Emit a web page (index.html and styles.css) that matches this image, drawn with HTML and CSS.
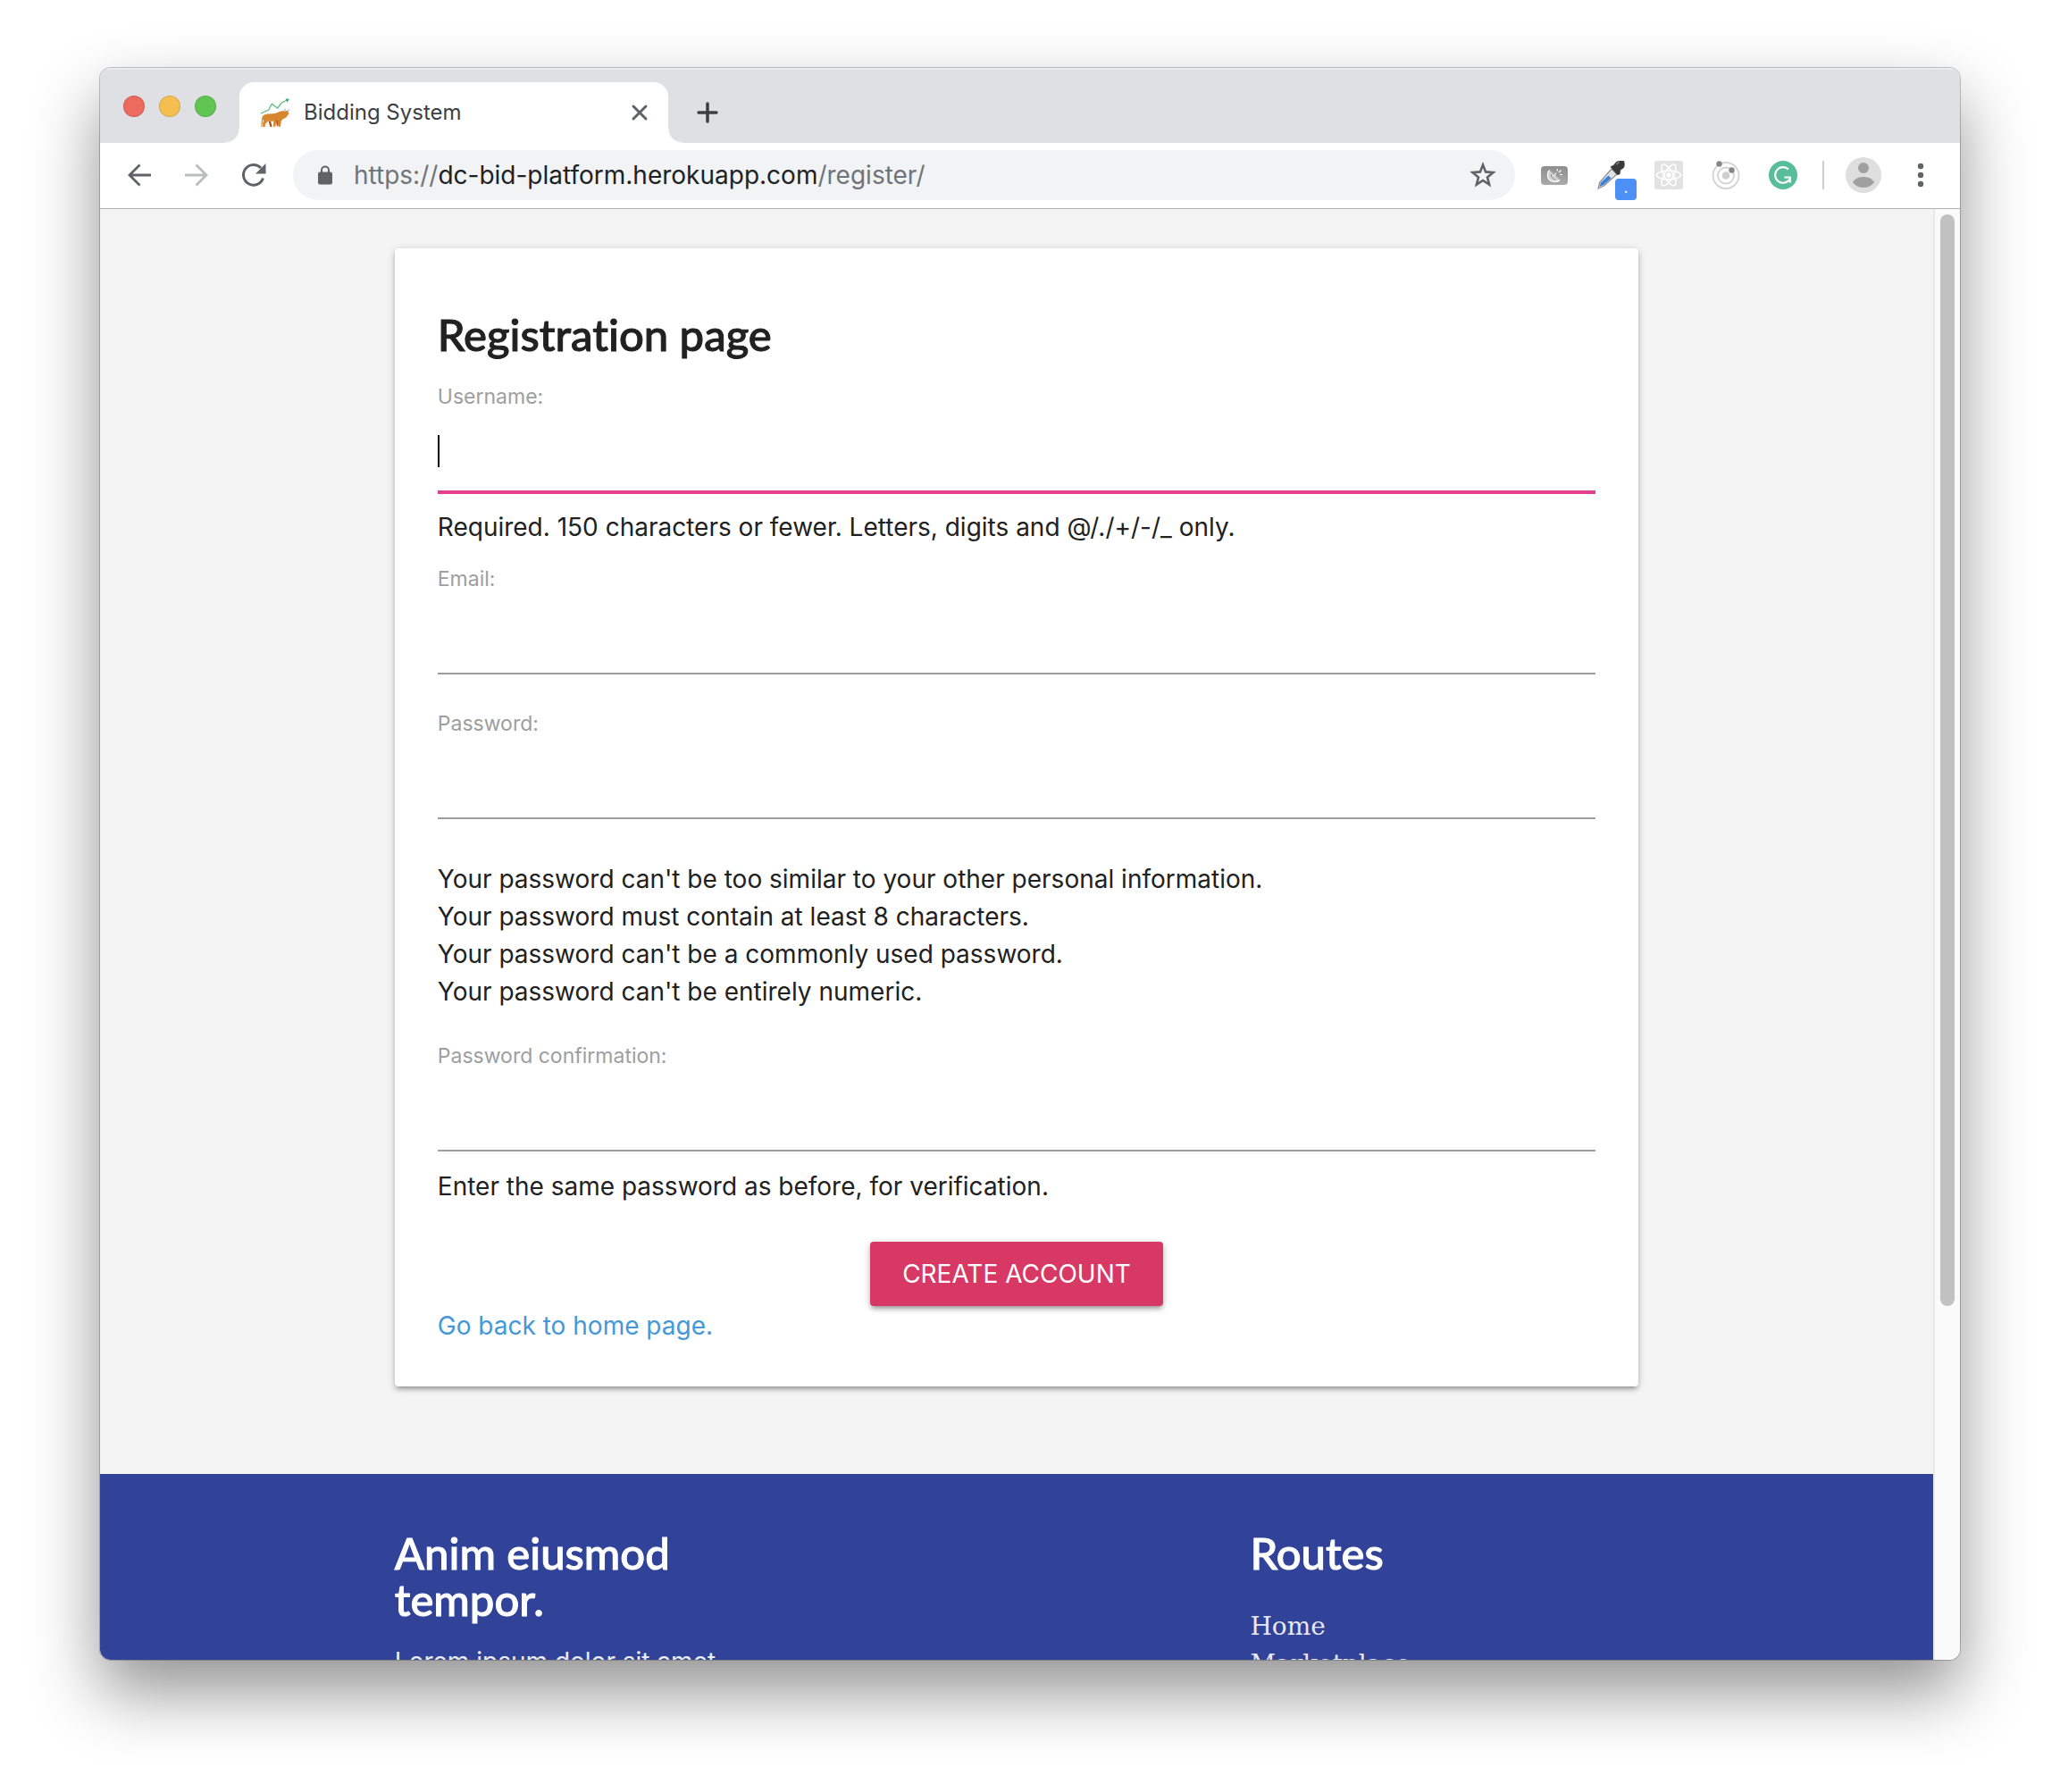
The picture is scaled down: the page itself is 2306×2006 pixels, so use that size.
FILE: index.html
```
<!DOCTYPE html>
<html lang="en">
<head>
<meta charset="utf-8">
<title>Bidding System</title>
<link rel="stylesheet" href="styles.css">
</head>
<body>
<div class="window">
  <header class="tab-strip">
    <div class="lights">
      <button class="light light-close" type="button" aria-label="Close window"></button>
      <button class="light light-min" type="button" aria-label="Minimize window"></button>
      <button class="light light-max" type="button" aria-label="Zoom window"></button>
    </div>
    <div class="tab">
      <svg class="favicon" width="32" height="32" viewBox="0 0 32 32" fill="none">
        <path d="M0 17 8.700 13 12.300 6.300 18.700 11 23.300 5 29.500 2" stroke="#5fbd7c" stroke-width="1.300"/>
        <path d="m27.500 .5 4.300.3-2.200 3.600z" fill="#3fa965"/>
        <path d="M1 23c.2-3 2.500-5 6-5.500 4-.3 8 .2 11.500-1.500 3-1.600 5.500-2 8-1.600l4 .5.900 3.100-1.400.7c-.6 1.500-1.200 2.800-2.800 3.300-2 1-3.600 1.800-4.400 3.500L22 31.800h-2.500l-.7-6.300-1.500.2-1 6.100h-2.400l.4-6.400c-2 .5-3.900.4-5.600-.2L5.600 28l-.8 1.600V32H2.400L2 28.300 3.200 25c-.6-.8-.9-1.300-.9-2.200L1.300 32H.2z" fill="#d8862d"/>
        <path d="m8.500 25.500 2.600.3 1.500 6.200h-2.300zM17 25l1.800-.5.600 5-1.400 2.500z" fill="#a8561c"/>
        <path d="M27.500 14.500c2 .7 3.700 0 4-2M26.500 14c-.2-1 .3-1.700 1.300-2" stroke="#8d8a86" stroke-width="1"/>
      </svg>
      <span class="tab-title">Bidding System</span>
      <button class="icon-button tab-close" type="button" aria-label="Close tab">
        <svg width="20" height="20" viewBox="0 0 20 20" stroke="#5f6368" stroke-width="3" stroke-linecap="round"><path d="m3 3 14 14M17 3 3 17"/></svg>
      </button>
    </div>
    <button class="icon-button new-tab" type="button" aria-label="New tab">
      <svg width="24" height="24" viewBox="0 0 24 24" stroke="#3c4043" stroke-width="3.500" stroke-linecap="round"><path d="M12 2v20M2 12h20"/></svg>
    </button>
  </header>

  <nav class="toolbar" aria-label="Browser toolbar">
    <button class="icon-button" type="button" aria-label="Back">
      <svg width="28" height="28" viewBox="0 0 28 28" fill="none" stroke="#5f6368" stroke-width="2.800"><path d="M27 14H3M14.500 2.500 3 14l11.500 11.500"/></svg>
    </button>
    <button class="icon-button" type="button" aria-label="Forward">
      <svg width="28" height="28" viewBox="0 0 28 28" fill="none" stroke="#babcbe" stroke-width="2.800"><path d="M1 14h24M13.500 2.500 25 14 13.500 25.500"/></svg>
    </button>
    <button class="icon-button" type="button" aria-label="Reload">
      <svg width="28" height="28" viewBox="0 0 28 28" fill="none" stroke="#5f6368" stroke-width="3"><path d="M24.500 17.500A11.300 11.300 0 1 1 22 6"/><path d="M27.500 1v11.500H16z" fill="#5f6368" stroke="none"/></svg>
    </button>
    <div class="omnibox">
      <svg class="lock" width="16" height="22" viewBox="0 0 16 22"><path d="M4 9V5.500a4 4 0 0 1 8 0V9" fill="none" stroke="#5f6368" stroke-width="2"/><rect y="7.500" width="16" height="14" rx="2" fill="#5f6368"/></svg>
      <div class="url" role="textbox" aria-label="Address">https://<span class="host">dc-bid-platform.herokuapp.com</span>/register/</div>
      <button class="icon-button star" type="button" aria-label="Bookmark this page">
        <svg width="30" height="30" viewBox="0 0 30 30" fill="none" stroke="#5f6368" stroke-width="2.600"><path d="m15 3.500 3.100 7.900 8.400.6-6.500 5.400 2.100 8.200L15 21l-7.100 4.600L10 17.400 3.500 12l8.400-.6z"/></svg>
      </button>
    </div>
    <div class="extensions">
      <button class="icon-button" type="button" aria-label="Satellite">
        <svg width="32" height="32" viewBox="0 0 32 32" fill="none"><defs><linearGradient id="dish" x1="0" y1="0" x2="0" y2="1"><stop stop-color="#8e8e8e"/><stop offset="1" stop-color="#aaa"/></linearGradient></defs><rect x="1" y="6" width="30" height="21" rx="4" fill="url(#dish)"/><g stroke="#fff" stroke-width="1.200"><path d="M10.500 10.500c-3.500 4-2.500 11 3 12.500 3 .8 6.500.5 8.500-1.500z" fill="#fff" fill-opacity=".55"/><path d="M10.500 10.500 22 21.500M12.500 15c-.5 3 1.500 5.500 5 6" stroke="#8e8e8e" stroke-width="1"/><path d="m15.500 17 2.500-3.500M19.500 9l-.5 2.500M23.500 10.500 21 13M25 15.500h-3"/></g></svg>
      </button>
      <button class="icon-button picker" type="button" aria-label="Color picker">
        <svg width="32" height="32" viewBox="0 0 32 32" fill="none"><path d="m16 9 6 6L7.500 28 1 31l1.500-6.500z" fill="#dfe3e8" stroke="#8d9093" stroke-width="1.200"/><path d="m12.500 16.500 3 3L7 27l-4.500 2 1.500-4.500z" fill="#3c7fd6"/><path d="M14.500 6.500 18 5l3-3.500C23-.5 27 0 30 0c1 3 1 6-.5 8L26 10.500 25.500 15 22.500 16z" fill="#3a3a3a"/><path d="m21.500 4 3-2.500" stroke="#8b8b8b" stroke-width="1.500"/></svg>
        <span class="badge">.</span>
      </button>
      <button class="icon-button" type="button" aria-label="React developer tools">
        <svg width="32" height="32" viewBox="0 0 32 32" fill="none"><rect width="32" height="32" rx="3" fill="#e2e2e2"/><g stroke="#fff" stroke-width="1.500"><ellipse cx="16" cy="16" rx="13.500" ry="5"/><ellipse cx="16" cy="16" rx="13.500" ry="5" transform="rotate(60 16 16)"/><ellipse cx="16" cy="16" rx="13.500" ry="5" transform="rotate(120 16 16)"/></g><circle cx="16" cy="16" r="2.800" fill="#fff"/></svg>
      </button>
      <button class="icon-button" type="button" aria-label="Orbit">
        <svg width="32" height="32" viewBox="0 0 32 32" fill="none"><circle cx="16" cy="16.500" r="14.500" stroke="#d3d3d3" stroke-width="1.800"/><circle cx="16" cy="16.500" r="9" stroke="#d3d3d3" stroke-width="1.800"/><circle cx="16" cy="16.500" r="4.300" fill="#cfcfcf"/><circle cx="8.500" cy="3.500" r="3.200" fill="#868686"/><circle cx="22.500" cy="10.500" r="3.200" fill="#868686"/></svg>
      </button>
      <button class="icon-button" type="button" aria-label="Grammar check">
        <svg width="32" height="32" viewBox="0 0 32 32" fill="none"><circle cx="16" cy="16" r="16" fill="#58bd9b"/><path d="M22 9.500A8.800 8.800 0 1 0 23.500 20.500M17.500 18.500h6.300v6" stroke="#fff" stroke-width="2.200"/></svg>
      </button>
    </div>
    <span class="divider"></span>
    <button class="icon-button avatar" type="button" aria-label="Profile">
      <svg width="40" height="40" viewBox="0 0 40 40"><circle cx="20" cy="20" r="20" fill="#dedede"/><circle cx="20" cy="12" r="6" fill="#a0a0a0"/><path d="M8 28c2-4 7-6 12-6s10 2 12 6c-3 4-7 6-12 6S11 32 8 28z" fill="#a0a0a0"/></svg>
    </button>
    <button class="icon-button menu" type="button" aria-label="Menu">
      <svg width="8" height="28" viewBox="0 0 8 28" fill="#5f6368"><circle cx="4" cy="4" r="3.200"/><circle cx="4" cy="14" r="3.200"/><circle cx="4" cy="24" r="3.200"/></svg>
    </button>
  </nav>

  <div class="viewport">
    <div class="page">
      <main class="container">
        <form class="card">
          <h1 class="heading">Registration page</h1>
          <div class="field">
            <label for="username">Username:</label>
            <input class="active" id="username" type="text">
            <p class="help">Required. 150 characters or fewer. Letters, digits and @/./+/-/_ only.</p>
          </div>
          <div class="field field-email">
            <label for="email">Email:</label>
            <input id="email" type="email">
          </div>
          <div class="field field-password">
            <label for="password">Password:</label>
            <input id="password" type="password">
            <ul class="rules">
              <li>Your password can't be too similar to your other personal information.</li>
              <li>Your password must contain at least 8 characters.</li>
              <li>Your password can't be a commonly used password.</li>
              <li>Your password can't be entirely numeric.</li>
            </ul>
          </div>
          <div class="field field-confirm">
            <label for="confirm">Password confirmation:</label>
            <input id="confirm" type="password">
            <p class="help">Enter the same password as before, for verification.</p>
          </div>
          <button class="submit" type="submit">CREATE ACCOUNT</button>
          <a class="home-link" href="#">Go back to home page.</a>
        </form>
      </main>
      <footer class="footer">
        <div class="container footer-grid">
          <section class="about">
            <h2 class="heading">Anim eiusmod tempor.</h2>
            <p>Lorem ipsum dolor sit amet</p>
          </section>
          <section class="routes">
            <h2 class="heading">Routes</h2>
            <ul>
              <li><a href="#">Home</a></li>
              <li><a href="#">Marketplace</a></li>
            </ul>
          </section>
        </div>
      </footer>
    </div>
    <div class="scrollbar"><div class="thumb"></div></div>
  </div>
</div>
</body>
</html>
```
FILE: styles.css
```
* {
  box-sizing: border-box;
}

body {
  display: flex;
  height: 100vh;
  margin: 0;
  padding: 76px 112px 148px;
  background: #fff;
  color: #212121;
  font: 28px/42px Inter, "Liberation Sans", sans-serif;
}

h1, h2, p, ul {
  margin: 0;
  padding: 0;
  font-weight: 400;
}

ul {
  list-style: none;
}

button, input {
  padding: 0;
  border: 0;
  background: none;
  color: inherit;
  font: inherit;
}

a {
  text-decoration: none;
}

.window {
  display: flex;
  flex: 1;
  flex-direction: column;
  min-width: 0;
  overflow: hidden;
  border-radius: 12px;
  background: #fff;
  box-shadow: 0 0 0 1px rgba(0, 0, 0, .22), 0 36px 76px rgba(0, 0, 0, .43);
}

/* Tab strip */
.tab-strip {
  display: flex;
  flex: none;
  align-items: flex-end;
  height: 84px;
  background: #dee0e4;
  box-shadow: inset 0 2px #eaebee;
}

.lights {
  display: flex;
  gap: 16px;
  align-self: center;
  margin: 2px 26px 0;
}

.light {
  width: 24px;
  height: 24px;
  border: 1px solid rgba(0, 0, 0, .12);
  border-radius: 50%;
}

.light-close { background: #ed6a5e; }
.light-min { background: #f5bf4f; }
.light-max { background: #61c554; }

.tab {
  position: relative;
  display: flex;
  align-items: center;
  gap: 16px;
  width: 480px;
  height: 68px;
  padding: 0 16px 0 24px;
  border-radius: 16px 16px 0 0;
  background: #fff;
}

/* Flared feet of the active tab */
.tab::before,
.tab::after {
  position: absolute;
  bottom: 0;
  width: 16px;
  height: 16px;
  content: "";
}

.tab::before {
  right: 100%;
  background: radial-gradient(circle at 0 0, transparent 15px, #fff 16px);
}

.tab::after {
  left: 100%;
  background: radial-gradient(circle at 100% 0, transparent 15px, #fff 16px);
}

.tab-title {
  flex: 1;
  color: #3c4043;
  font-size: 24px;
}

.icon-button {
  display: flex;
  flex: none;
  align-items: center;
  justify-content: center;
  width: 64px;
}

.tab-close {
  width: 32px;
}

.new-tab {
  width: 40px;
  height: 68px;
  margin-left: 24px;
}

/* Toolbar */
.toolbar {
  display: flex;
  flex: none;
  align-items: center;
  height: 74px;
  padding: 0 12px 1px;
  border-bottom: 1px solid #b0b1b3;
}

.omnibox {
  display: flex;
  flex: 1;
  align-items: center;
  height: 56px;
  margin: 0 12px;
  padding: 0 4px 0 28px;
  border-radius: 28px;
  background: #f1f3f4;
}

.url {
  flex: 1;
  margin-left: 24px;
  color: #707479;
  white-space: nowrap;
}

.host {
  color: #202124;
}

.extensions {
  display: flex;
}

.picker {
  position: relative;
}

.badge {
  position: absolute;
  top: 20px;
  left: 36px;
  width: 24px;
  height: 24px;
  border-radius: 4px;
  background: #4c8ff5;
  color: #fff;
  font-size: 18px;
  line-height: 20px;
}

.divider {
  width: 2px;
  height: 32px;
  margin: 0 24px 0 12px;
  background: #cbcccd;
}

.avatar {
  width: 40px;
}

.menu {
  margin-left: 12px;
}

/* Web page */
.viewport {
  display: flex;
  flex: 1;
  min-height: 0;
}

.page {
  flex: 1;
  overflow: hidden;
  background: #f4f4f4;
}

.container {
  width: 70%;
  margin: 0 auto;
  padding: 0 22px;
}

main.container {
  padding-top: 44px;
  padding-bottom: 98px;
}

.card {
  display: flex;
  flex-direction: column;
  padding: 70px 48px 47px;
  border-radius: 4px;
  background: #fff;
  box-shadow: 0 4px 4px rgba(0, 0, 0, .14), 0 6px 2px -4px rgba(0, 0, 0, .12), 0 2px 10px rgba(0, 0, 0, .2);
}

.heading {
  font: 500 49px/52px Lato, sans-serif;
  font-variant-ligatures: none;
  -webkit-text-stroke: 1px currentColor;
}

.card .heading {
  margin-bottom: 27px;
}

.field {
  display: flex;
  flex-direction: column;
}

.field label {
  color: #9e9e9e;
  font-size: 23px;
  line-height: 34px;
}

.field input {
  height: 90px;
  border-bottom: 2px solid #9e9e9e;
  border-radius: 0;
  outline: none;
}

/* Current field, with its text cursor */
.field input.active {
  border-color: #e23f91;
  background: linear-gradient(#000, #000) left center / 2px 36px no-repeat;
  box-shadow: 0 2px #e23f91;
}

.help {
  margin-top: 18px;
}

.field-email { margin-top: 20px; }
.field-password { margin-top: 38px; }
.field-confirm { margin-top: 34px; }

.rules {
  margin-top: 46px;
}

.submit {
  align-self: center;
  height: 72px;
  margin-top: 41px;
  margin-bottom: 1px;
  padding: 0 36px;
  border-radius: 4px;
  background: #d73864;
  color: #fff;
  box-shadow: 0 4px 4px rgba(0, 0, 0, .14), 0 6px 2px -4px rgba(0, 0, 0, .12), 0 2px 10px rgba(0, 0, 0, .2);
}

.home-link {
  align-self: flex-start;
  color: #4598d8;
}

.footer {
  padding: 62px 0;
  background: #314299;
  color: #fff;
}

.footer-grid {
  display: grid;
  grid-template-columns: repeat(3, 1fr);
  column-gap: 44px;
}

.about p {
  margin-top: 23px;
  color: #eceef6;
}

.routes {
  grid-column: 3;
}

.routes ul {
  margin-top: 36px;
  font-family: "DejaVu Serif", serif;
}

.routes a {
  color: #e6e8f3;
}

.scrollbar {
  width: 30px;
  padding: 6px 6px 0;
  border-left: 2px solid #e8e8e8;
  background: #fafafa;
}

.thumb {
  width: 16px;
  height: 75.5%;
  border-radius: 8px;
  background: #c1c1c1;
}
```
